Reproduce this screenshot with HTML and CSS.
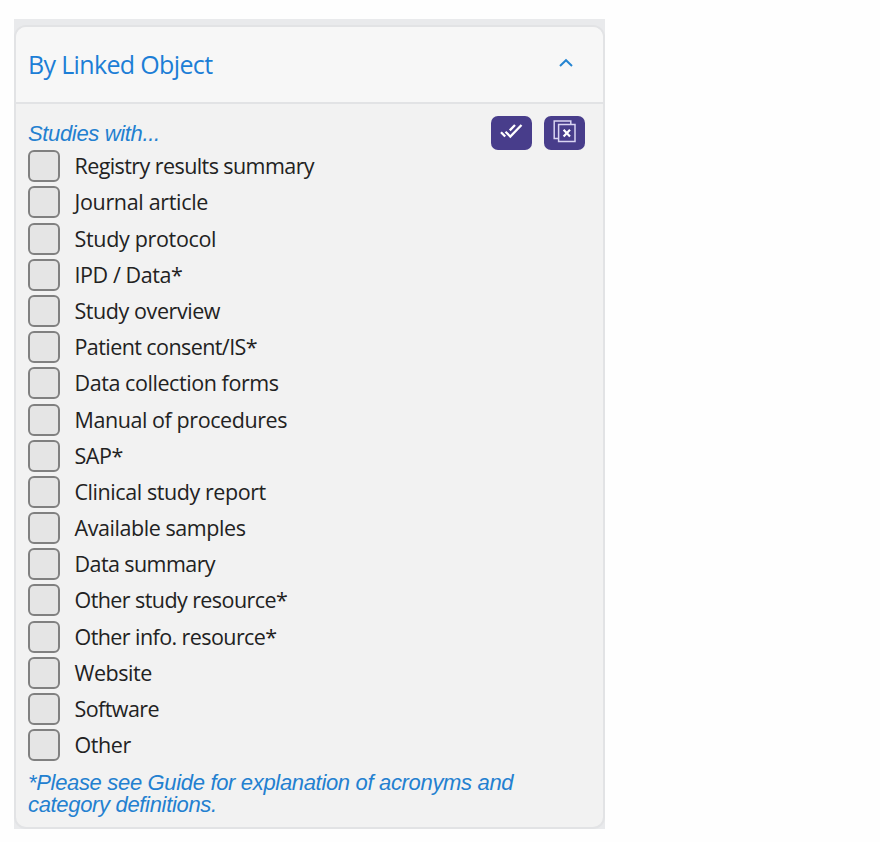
FILE: index.html
```html
<!DOCTYPE html>
<html lang="en">
<head>
<meta charset="utf-8">
<title>By Linked Object</title>
<link rel="stylesheet" href="styles.css">
</head>
<body>
<div class="backdrop">
  <section class="panel">
    <header class="panel-header">
      <h2 class="title"><span>By Linked Object</span></h2>
      <svg class="chevron" width="16" height="12" viewBox="0 0 16 12"><path d="M2 9 8 3.2 14 9"/></svg>
    </header>
    <div class="panel-body">
      <div class="toolbar">
        <p class="intro"><span>Studies with...</span></p>
        <div class="actions">
          <button class="action" aria-label="Select all">
            <svg width="41" height="34" viewBox="0 0 41 34"><path class="check" d="M10 16.2 14.2 20.5M14.5 15.8 19.3 20.5 30.5 9M18.8 14.4 24 9"/></svg>
          </button>
          <button class="action" aria-label="Clear all">
            <svg width="41" height="34" viewBox="0 0 41 34"><path class="sheet" d="M14 22.5H10.2V5H26.8V8.3"/><path class="sheet" d="M14.6 8.5H31V25.6H14.6Z"/><path class="cross" d="M19.6 13.8 26 20.4M26 13.8 19.6 20.4"/></svg>
          </button>
        </div>
      </div>
      <ul class="options">
        <li class="tight"><i class="box"></i><span>Registry results summary</span></li>
        <li class="loose"><i class="box"></i><span>Journal article</span></li>
        <li class="loose spaced"><i class="box"></i><span>Study protocol</span></li>
        <li><i class="box"></i><span>IPD / Data*</span></li>
        <li><i class="box"></i><span>Study overview</span></li>
        <li class="tight"><i class="box"></i><span>Patient consent/IS*</span></li>
        <li><i class="box"></i><span>Data collection forms</span></li>
        <li class="spaced"><i class="box"></i><span>Manual of procedures</span></li>
        <li><i class="box"></i><span>SAP*</span></li>
        <li><i class="box"></i><span>Clinical study report</span></li>
        <li><i class="box"></i><span>Available samples</span></li>
        <li class="tight"><i class="box"></i><span>Data summary</span></li>
        <li class="tight"><i class="box"></i><span>Other study resource*</span></li>
        <li class="tight spaced"><i class="box"></i><span>Other info. resource*</span></li>
        <li><i class="box"></i><span>Website</span></li>
        <li class="tight"><i class="box"></i><span>Software</span></li>
        <li><i class="box"></i><span>Other</span></li>
      </ul>
      <p class="note">*Please see Guide for explanation of acronyms and<br>category definitions.</p>
    </div>
  </section>
</div>
</body>
</html>
```
FILE: styles.css
```css
* { box-sizing: border-box; }
body { margin: 0; padding: 19px 0 0 14px; background: #fefefe; font-family: "Open Sans", "Noto Sans", sans-serif; }
h2, p, ul { margin: 0; padding: 0; font-weight: 400; }
.backdrop { width: 591px; height: 810px; padding-top: 6px; background: #e9eaec; }
.panel { height: 804px; border: 2px solid #e2e3e5; border-radius: 12px; background: #f2f2f2; overflow: hidden; }
.panel-header { display: flex; align-items: center; justify-content: space-between; height: 77px; padding: 0 29px 2px 12px; border-bottom: 2px solid #e2e3e5; background: #f7f7f7; }
.title { font-size: 25px; line-height: 34px; letter-spacing: -0.65px; color: #1c7ed6; }
.chevron { margin-bottom: 2px; fill: none; stroke: #2585d2; stroke-width: 2; }
.panel-body { padding: 11px 18px 0 12px; }
.toolbar { display: flex; justify-content: space-between; height: 35px; }
.intro { padding-top: 7px; font: italic 22px/24px "Liberation Sans", Arial, sans-serif; letter-spacing: -0.35px; color: #2380d0; }
.actions { display: flex; gap: 12px; padding-top: 1px; }
.action { width: 41px; height: 34px; padding: 0; border: 0; border-radius: 7px; background: #483d8b; }
.action svg { display: block; fill: none; stroke: #fff; }
.check { stroke-width: 2.3; }
.sheet { stroke: #d9d4f2; stroke-width: 1.5; }
.cross { stroke-width: 2.2; }
.options { list-style: none; }
.options li { display: flex; align-items: center; gap: 14.5px; height: 36px; padding-bottom: 4px; font-size: 21.5px; line-height: 32px; letter-spacing: -0.43px; color: #222; }
.options .tight { letter-spacing: -0.58px; }
.options .loose { letter-spacing: -0.33px; }
.options .spaced { margin-top: 1px; }
.box { width: 32px; height: 32px; border: 2px solid #808080; border-radius: 6px; background: #e5e5e5; }
.note { padding-top: 7px; font: italic 22px/22px "Liberation Sans", Arial, sans-serif; letter-spacing: -0.33px; color: #2380d0; white-space: nowrap; }
```
